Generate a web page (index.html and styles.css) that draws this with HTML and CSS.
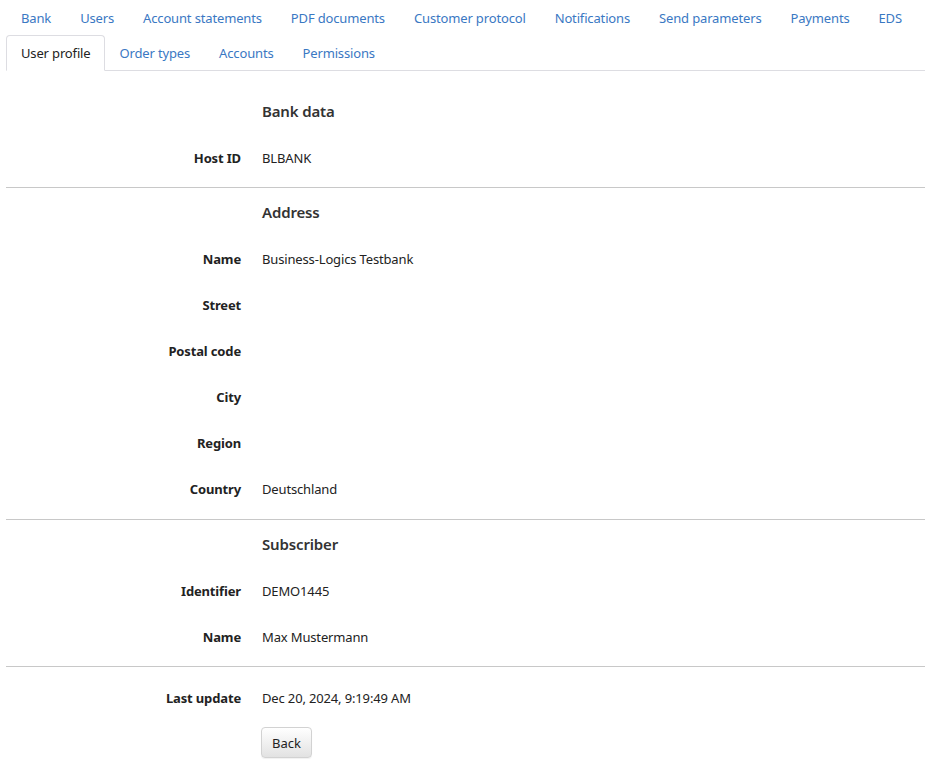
FILE: index.html
```html
<!DOCTYPE html>
<html lang="en">
<head>
<meta charset="utf-8">
<title>User profile</title>
<link rel="stylesheet" href="styles.css">
</head>
<body>
<div class="page">
  <ul class="tabs">
    <li><a href="#">Bank</a></li>
    <li><a href="#">Users</a></li>
    <li><a href="#">Account statements</a></li>
    <li><a href="#">PDF documents</a></li>
    <li><a href="#">Customer protocol</a></li>
    <li><a href="#">Notifications</a></li>
    <li><a href="#">Send parameters</a></li>
    <li><a href="#">Payments</a></li>
    <li><a href="#">EDS</a></li>
    <li class="active"><a href="#">User profile</a></li>
    <li><a href="#">Order types</a></li>
    <li><a href="#">Accounts</a></li>
    <li><a href="#">Permissions</a></li>
  </ul>

  <div class="content">
    <section class="group">
      <div class="row head"><span></span><h4>Bank data</h4></div>
      <div class="row"><label>Host ID</label><span>BLBANK</span></div>
    </section>
    <hr class="sep">
    <section class="group long">
      <div class="row head"><span></span><h4>Address</h4></div>
      <div class="row"><label>Name</label><span>Business-Logics Testbank</span></div>
      <div class="row"><label>Street</label><span></span></div>
      <div class="row"><label>Postal code</label><span></span></div>
      <div class="row"><label>City</label><span></span></div>
      <div class="row"><label>Region</label><span></span></div>
      <div class="row"><label>Country</label><span>Deutschland</span></div>
    </section>
    <hr class="sep">
    <section class="group">
      <div class="row head"><span></span><h4>Subscriber</h4></div>
      <div class="row"><label>Identifier</label><span>DEMO1445</span></div>
      <div class="row"><label>Name</label><span>Max Mustermann</span></div>
    </section>
    <hr class="sep">
    <section class="group last">
      <div class="row"><label>Last update</label><span>Dec 20, 2024, 9:19:49 AM</span></div>
      <div class="row actions"><span></span><div><button type="button" class="btn">Back</button></div></div>
    </section>
  </div>
</div>
</body>
</html>
```

FILE: styles.css
```css
* { box-sizing: border-box; }
html, body { margin: 0; padding: 0; background: #fff; }
body {
  font-family: "Noto Sans", "Open Sans", Arial, sans-serif;
  font-size: 13px;
  letter-spacing: -0.15px;
  color: #222;
}
.page { padding: 0 11px 0 6px; }

.tabs {
  list-style: none;
  margin: 0;
  padding: 0;
  display: flex;
  flex-wrap: wrap;
  border-bottom: 1px solid #dddde2;
}
.tabs li { margin-bottom: -1px; }
.tabs a {
  display: block;
  padding: 8px 13px 7px 14px;
  line-height: 19px;
  color: #3a78c3;
  text-decoration: none;
  border: 1px solid transparent;
  border-radius: 4px 4px 0 0;
}
.tabs li.active a {
  color: #222;
  background: #fff;
  border-color: #dddde2 #dddde2 transparent;
}

.content { padding-top: 17px; }
.row {
  display: grid;
  grid-template-columns: 235px 1fr;
  column-gap: 21px;
  align-items: center;
  height: 46px;
}
.row.head { height: 47px; }
.row.head h4 { margin-top: -2px; }
.row label {
  text-align: right;
  font-weight: bold;
}
.row h4 {
  margin: 0;
  font-size: 15px;
  font-weight: 600;
  color: #333;
}
.sep {
  border: 0;
  border-top: 1px solid #c8c8c8;
  margin: 6px 0 1px;
}
.group.long { padding-bottom: 1px; }
.group.last { padding-top: 7px; }
.row.actions { height: 40px; align-items: start; padding-top: 6px; }
.btn {
  font: inherit;
  color: #222;
  height: 31px;
  padding: 0 10px;
  margin-left: -1px;
  border: 1px solid #d2d2d2;
  border-radius: 4px;
  background: linear-gradient(#ffffff, #e2e2e2);
  box-shadow: 0 1px 1px rgba(0,0,0,0.06);
  cursor: pointer;
}
```
